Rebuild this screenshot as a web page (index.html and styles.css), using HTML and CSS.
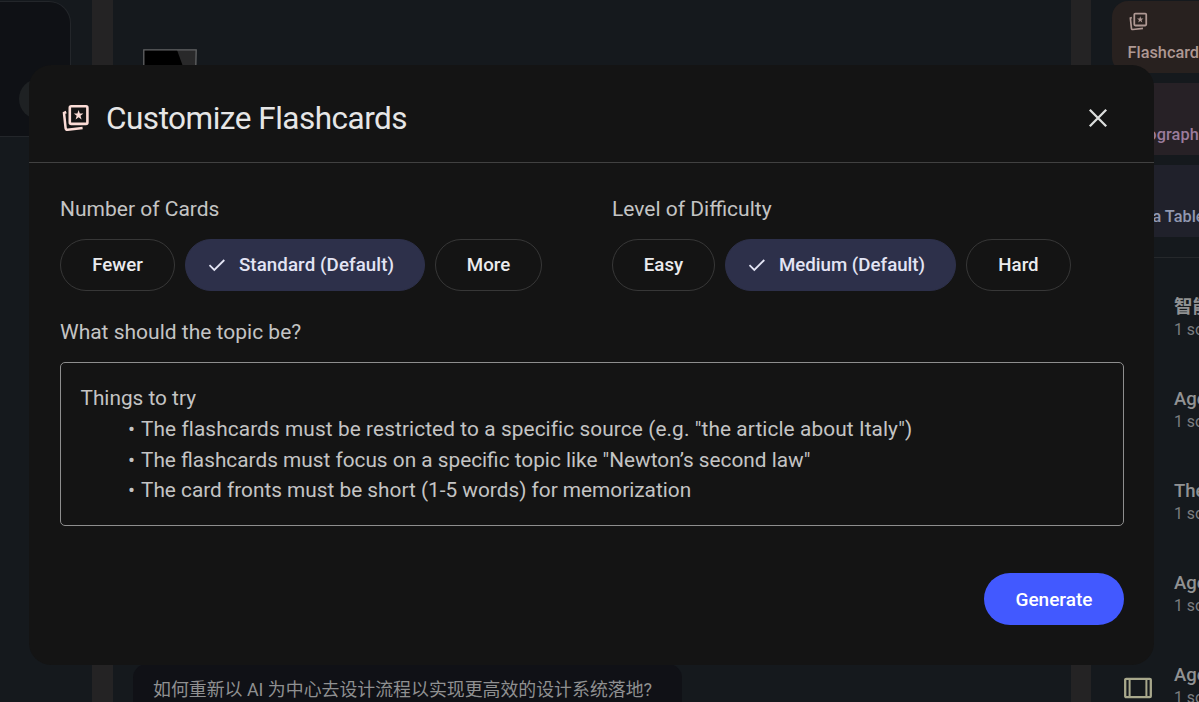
FILE: index.html
```html
<!DOCTYPE html>
<html lang="en">
<head>
    <meta charset="UTF-8">
    <meta name="viewport" content="width=device-width, initial-scale=1.0">
    <title>Customize Flashcards</title>
    <link rel="stylesheet" href="styles.css">
</head>
<body>
    <svg class="sprite" aria-hidden="true">
        <symbol id="cards-icon" viewBox="0 0 28 28">
            <rect x="7.8" y="2.3" width="17.6" height="17.6" rx="1.4" fill="none" stroke="currentColor" stroke-width="2.6"/>
            <path d="M4.2 8L2 9L3.6 24.2Q3.8 26 5.6 25.8L20.6 24.1" fill="none" stroke="currentColor" stroke-width="2.5"/>
            <path d="M16.6 6.1L17.8 9.6H21.4L18.5 11.8L19.6 15.4L16.6 13.2L13.6 15.4L14.7 11.8L11.8 9.6H15.4Z" fill="currentColor"/>
        </symbol>
        <symbol id="check-icon" viewBox="0 0 18 14">
            <path d="M1.5 7.2L6.3 12L16.3 2" fill="none" stroke="currentColor" stroke-width="1.8"/>
        </symbol>
    </svg>

    <div class="workspace">
        <aside class="sources">
            <div class="search-card">
                <span class="search-button"></span>
            </div>
        </aside>

        <main class="chat">
            <svg class="laptop" viewBox="0 0 54 34">
                <path d="M1 1H53V34H1Z" fill="#000"/>
                <path d="M34 1H53V34H46Z" fill="#29292a"/>
                <path d="M.8 34V.8H53.2L52.4 34" fill="none" stroke="#626364" stroke-width="1.3"/>
            </svg>
            <div class="suggestion" lang="zh">如何重新以 AI 为中心去设计流程以实现更高效的设计系统落地?</div>
        </main>

        <aside class="studio">
            <div class="tiles">
                <div class="tile tile-flashcards">
                    <svg class="tile-icon"><use href="#cards-icon"/></svg>
                    <span>Flashcards</span>
                </div>
                <div class="tile tile-infographic"><span>Infographic</span></div>
                <div class="tile tile-table"><span>Data Table</span></div>
            </div>
            <ul class="notes">
                <li><div><h4 lang="zh">智能体</h4><p>1 source</p></div></li>
                <li><div><h4>Agent</h4><p>1 source</p></div></li>
                <li><div><h4>The Agent</h4><p>1 source</p></div></li>
                <li><div><h4>Agent</h4><p>1 source</p></div></li>
                <li>
                    <svg class="deck-icon" viewBox="0 0 28 22">
                        <rect x="1.2" y="1.8" width="25.6" height="18.4" rx="1" fill="none" stroke="currentColor" stroke-width="2.3"/>
                        <path d="M5.6 2V20M22.4 2V20" stroke="currentColor" stroke-width="2"/>
                    </svg>
                    <div><h4>Agent</h4><p>1 source</p></div>
                </li>
            </ul>
        </aside>
    </div>

    <div class="modal" role="dialog">
        <div class="modal-header">
            <svg class="title-icon"><use href="#cards-icon"/></svg>
            <h2>Customize Flashcards</h2>
            <button class="close" aria-label="Close">
                <svg viewBox="0 0 20 20"><path d="M1.8 1.8L18.2 18.2M18.2 1.8L1.8 18.2" stroke="currentColor" stroke-width="2.3"/></svg>
            </button>
        </div>

        <div class="modal-body">
            <div class="options">
                <div class="option">
                    <h3>Number of Cards</h3>
                    <div class="pills">
                        <button class="pill fewer">Fewer</button>
                        <button class="pill standard selected"><svg><use href="#check-icon"/></svg>Standard (Default)</button>
                        <button class="pill more">More</button>
                    </div>
                </div>
                <div class="option">
                    <h3>Level of Difficulty</h3>
                    <div class="pills">
                        <button class="pill easy">Easy</button>
                        <button class="pill medium selected"><svg><use href="#check-icon"/></svg>Medium (Default)</button>
                        <button class="pill hard">Hard</button>
                    </div>
                </div>
            </div>

            <h3>What should the topic be?</h3>
            <div class="topic">
                <p>Things to try</p>
                <ul>
                    <li class="wide">The flashcards must be restricted to a specific source (e.g. "the article about Italy")</li>
                    <li>The flashcards must focus on a specific topic like "Newton’s second law"</li>
                    <li>The card fronts must be short (1-5 words) for memorization</li>
                </ul>
            </div>

            <button class="generate">Generate</button>
        </div>
    </div>
</body>
</html>
```
FILE: styles.css
```css
* {
    box-sizing: border-box;
}

body {
    margin: 0;
    height: 702px;
    overflow: hidden;
    position: relative;
    background-color: #242324;
    font-family: Roboto, "Noto Sans CJK SC", sans-serif;
}

h2, h3, h4, p, ul {
    margin: 0;
    padding: 0;
    font-weight: 400;
}

ul {
    list-style: none;
}

button {
    font-family: inherit;
    padding: 0;
}

.sprite {
    position: absolute;
    width: 0;
    height: 0;
}

/* Dimmed page behind the dialog */
.workspace {
    display: grid;
    grid-template-columns: 92px 958px 108px;
    column-gap: 20.5px;
    height: 702px;
}

.sources, .chat, .studio {
    background-color: #15191d;
    overflow: hidden;
}

.search-card {
    width: 71px;
    height: 136px;
    margin-top: 1px;
    padding: 77px 0 0 19px;
    background-color: #0f1115;
    border: 1px solid #23262a;
    border-left: 0;
    border-radius: 0 22px 0 0;
}

.search-button {
    display: block;
    width: 40px;
    height: 40px;
    border-radius: 50%;
    background-color: #1e2123;
}

.chat {
    display: flex;
    flex-direction: column;
    align-items: flex-start;
    justify-content: space-between;
}

.laptop {
    width: 54px;
    height: 34px;
    margin: 49px 0 0 30px;
}

.suggestion {
    width: 549px;
    height: 38px;
    margin-left: 20.5px;
    padding: 0 20px;
    border-radius: 14px 14px 0 0;
    background-color: #101116;
    color: #8f9091;
    font-size: 17.9px;
    line-height: 51px;
    white-space: nowrap;
}

.tiles {
    display: flex;
    flex-direction: column;
    gap: 10px;
    width: 170px;
    padding: 1px 0 20px 21px;
}

.tile {
    display: flex;
    flex-direction: column;
    justify-content: flex-end;
    height: 72px;
    padding: 0 16px 9px 15.6px;
    border-radius: 16px;
    font-size: 16.3px;
    font-weight: 500;
    line-height: 22px;
}

.tile-flashcards {
    background-color: #28211f;
    color: #ae9893;
}

.tile-infographic {
    background-color: #272126;
    color: #9b7c9c;
    letter-spacing: 0.1px;
}

.tile-table {
    background-color: #20212b;
    color: #9198b0;
}

.tile-icon {
    width: 19px;
    height: 19px;
    margin: 0 0 11px 1px;
}

.notes {
    width: 171px;
    border-top: 1px solid #25282b;
    padding-top: 3px;
}

.notes li {
    display: flex;
    align-items: center;
    justify-content: flex-end;
    gap: 22px;
    height: 92px;
    padding-top: 23px;
}

.notes li > div {
    width: 88px;
    height: 69px;
    padding-top: 11px;
}

.notes h4 {
    color: #919293;
    font-size: 18.5px;
    font-weight: 500;
    line-height: 24px;
    white-space: nowrap;
}

.notes h4:lang(zh) {
    font-weight: 700;
}

.notes p {
    color: #7c7e80;
    font-size: 15.8px;
    line-height: 22px;
}

.deck-icon {
    width: 28px;
    height: 22px;
    margin-top: 2px;
    color: #a8a88c;
}

/* Dialog */
.modal {
    position: absolute;
    top: 65px;
    left: 29px;
    width: 1125px;
    height: 600px;
    border-radius: 22px;
    background-color: #141414;
    color: #c4c4c4;
}

.modal-header {
    display: flex;
    align-items: center;
    height: 98px;
    padding: 8px 46px 0 33px;
    border-bottom: 1px solid #414141;
}

.title-icon {
    width: 28px;
    height: 28px;
    color: #fbdcd6;
}

.modal-header h2 {
    margin: 2px 0 0 16px;
    color: #e6e6e6;
    font-size: 31.5px;
    letter-spacing: -0.5px;
}

.close {
    display: flex;
    margin-left: auto;
    border: 0;
    background: none;
    color: #dcdedd;
}

.close svg {
    width: 20px;
    height: 20px;
}

.modal-body {
    display: flex;
    flex-direction: column;
    padding: 30px 30px 0 31px;
}

.options {
    display: grid;
    grid-template-columns: 552px 1fr;
    margin-bottom: 25px;
}

.modal-body h3 {
    font-size: 21px;
    line-height: 32px;
}

.pills {
    display: flex;
    gap: 10px;
    margin-top: 14px;
}

.pill {
    display: flex;
    align-items: center;
    justify-content: center;
    height: 52px;
    border: 1px solid #373737;
    border-radius: 26px;
    background: none;
    color: #ebebee;
    font-size: 18.7px;
    font-weight: 500;
    white-space: nowrap;
}

.pill svg {
    width: 18px;
    height: 14px;
    margin-right: 12.5px;
}

.selected {
    justify-content: flex-start;
    padding-left: 22.4px;
    border-color: #2d304a;
    background-color: #2d304a;
    color: #e3e4f4;
}

.fewer { width: 115px; }
.standard { width: 240px; letter-spacing: 0.1px; }
.more { width: 107px; }
.easy { width: 103px; }
.medium { width: 231px; }
.hard { width: 105px; }

.topic {
    height: 164px;
    margin-top: 14px;
    padding: 20px 19.5px;
    border: 1px solid #8e8e8e;
    border-radius: 5px;
    font-size: 20.8px;
    line-height: 30.8px;
}

.topic li {
    display: flex;
    padding-left: 47.5px;
    white-space: nowrap;
}

.topic .wide {
    letter-spacing: 0.1px;
}

.topic li::before {
    content: "•";
    width: 13px;
}

.generate {
    align-self: flex-end;
    width: 140px;
    height: 52px;
    margin-top: 47px;
    border: 0;
    border-radius: 26px;
    background-color: #4259ff;
    color: #fff;
    font-size: 19px;
    font-weight: 500;
}
```
